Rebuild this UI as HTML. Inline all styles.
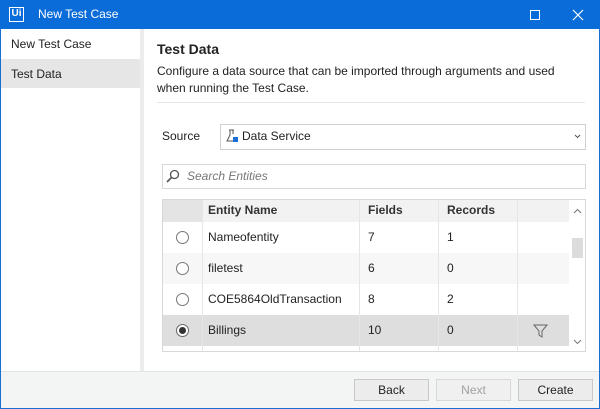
<!DOCTYPE html>
<html><head><style>
*{box-sizing:border-box;margin:0;padding:0}
body{width:600px;height:409px;position:relative;font-family:"Segoe UI","Liberation Sans",sans-serif;font-size:12px;color:#222;background:#fff;overflow:hidden}
.a{position:absolute}
.win{left:0;top:0;width:600px;height:409px;border:1px solid #1a6fd6}
.title{left:0;top:0;width:600px;height:29px;background:#0a6cd8;color:#fff}
.side{left:1px;top:29px;width:139px;height:342px;background:#fff}
.gap{left:140px;top:29px;width:4px;height:342px;background:#ececec}
.foot{left:1px;top:371px;width:598px;height:37px;background:#f3f4f4;border-top:1px solid #e4e4e4}
.btn{top:379px;height:22px;width:75px;border:1px solid #c8c8c8;background:#ececec;text-align:center;line-height:20px;font-size:12px}
.cell{position:absolute;line-height:31px;font-size:12px}
.radio{position:absolute;left:13px;width:13px;height:13px;border:1px solid #777;border-radius:50%;background:#fff}
</style></head><body>
<div class="a win"></div>
<div class="a title">
 <div class="a" style="left:9px;top:7px;width:15px;height:15px;border:1.5px solid #fff;font-size:10px;font-weight:bold;line-height:12px;text-align:center">Ui</div>
 <div class="a" style="left:38px;top:7px;font-size:12px">New Test Case</div>
 <div class="a" style="left:530px;top:10px;width:10px;height:10px;border:1px solid #fff"></div>
 <svg class="a" style="left:572px;top:9px" width="12" height="12"><path d="M1 1L11 11M11 1L1 11" stroke="#fff" stroke-width="1.2"/></svg>
</div>
<div class="a side">
 <div class="a" style="left:10px;top:8px;font-size:12px">New Test Case</div>
 <div class="a" style="left:0;top:30px;width:139px;height:29px;background:#e6e6e6"></div>
 <div class="a" style="left:10px;top:38px;font-size:12px">Test Data</div>
</div>
<div class="a gap"></div>
<div class="a" style="left:157px;top:41px;font-size:14px;font-weight:600">Test Data</div>
<div class="a" style="left:157px;top:63px;font-size:12px;line-height:17px;width:420px">Configure a data source that can be imported through arguments and used when running the Test Case.</div>
<div class="a" style="left:157px;top:102px;width:428px;height:1px;background:#e6e6e6"></div>
<div class="a" style="left:162px;top:129px">Source</div>
<div class="a" style="left:220px;top:124px;width:366px;height:26px;border:1px solid #d0d0d0"></div>
<svg class="a" style="left:226px;top:129px" width="12" height="14"><path d="M3 1h5M4 1v5L1 12h7M7 1v4" stroke="#555" fill="none"/><rect x="7" y="8" width="5" height="5" fill="#1a6fd6"/></svg>
<div class="a" style="left:242px;top:129px">Data Service</div>
<svg class="a" style="left:574px;top:134px" width="7" height="5"><path d="M1 1l2.5 2.5L6 1" stroke="#555" fill="none"/></svg>
<div class="a" style="left:162px;top:164px;width:424px;height:25px;border:1px solid #d8d8d8"></div>
<svg class="a" style="left:166px;top:169px" width="14" height="14"><circle cx="8.5" cy="5.5" r="4" stroke="#555" fill="none" stroke-width="1.3"/><path d="M5.5 8.5L1 13" stroke="#555" stroke-width="1.6"/></svg>
<div class="a" style="left:187px;top:169px;font-style:italic;color:#777">Search Entities</div>
<div class="a" style="left:162px;top:199px;width:424px;height:153px;border:1px solid #d8d8d8;overflow:hidden">
 <div class="a" style="left:0;top:0;width:406px;height:22px;background:#f2f2f2"></div>
 <div class="a" style="left:0;top:0;width:40px;height:22px;background:#e4e4e4"></div>
 <div class="cell" style="left:45px;top:-5px;font-weight:600;color:#333">Entity Name</div>
 <div class="cell" style="left:205px;top:-5px;font-weight:600;color:#333">Fields</div>
 <div class="cell" style="left:284px;top:-5px;font-weight:600;color:#333">Records</div>
 <div class="a" style="left:0;top:53px;width:406px;height:31px;background:#f7f7f7"></div>
 <div class="a" style="left:0;top:115px;width:406px;height:31px;background:#dedede"></div>
 <div class="a" style="left:39px;top:0;width:1px;height:153px;background:#e6e6e6"></div>
 <div class="a" style="left:196px;top:0;width:1px;height:153px;background:#e6e6e6"></div>
 <div class="a" style="left:275px;top:0;width:1px;height:153px;background:#e6e6e6"></div>
 <div class="a" style="left:354px;top:0;width:1px;height:153px;background:#e6e6e6"></div>
 <div class="radio" style="top:31px"></div>
 <div class="radio" style="top:62px"></div>
 <div class="radio" style="top:93px"></div>
 <div class="radio" style="top:124px;border-color:#666"><div class="a" style="left:2px;top:2px;width:7px;height:7px;border-radius:50%;background:#333"></div></div>
 <div class="cell" style="left:45px;top:22px">Nameofentity</div><div class="cell" style="left:205px;top:22px">7</div><div class="cell" style="left:284px;top:22px">1</div>
 <div class="cell" style="left:45px;top:53px">filetest</div><div class="cell" style="left:205px;top:53px">6</div><div class="cell" style="left:284px;top:53px">0</div>
 <div class="cell" style="left:45px;top:84px">COE5864OldTransaction</div><div class="cell" style="left:205px;top:84px">8</div><div class="cell" style="left:284px;top:84px">2</div>
 <div class="cell" style="left:45px;top:115px">Billings</div><div class="cell" style="left:205px;top:115px">10</div><div class="cell" style="left:284px;top:115px">0</div>
 <svg class="a" style="left:370px;top:124px" width="15" height="14"><path d="M1 1h13L9 7v6L6 11V7z" stroke="#666" fill="none"/></svg>
 <div class="a" style="left:406px;top:0;width:17px;height:153px;background:#fff"></div>
 <svg class="a" style="left:410px;top:8px" width="9" height="6"><path d="M1 5l3.5-3.5L8 5" stroke="#777" fill="none"/></svg>
 <div class="a" style="left:409px;top:38px;width:11px;height:20px;background:#dcdcdc"></div>
 <svg class="a" style="left:410px;top:139px" width="9" height="6"><path d="M1 1l3.5 3.5L8 1" stroke="#777" fill="none"/></svg>
</div>
<div class="a foot"></div>
<div class="a btn" style="left:354px">Back</div>
<div class="a btn" style="left:436px;color:#a0a0a0;background:#f0f0f0;border-color:#d8d8d8">Next</div>
<div class="a btn" style="left:518px">Create</div>
</body></html>
